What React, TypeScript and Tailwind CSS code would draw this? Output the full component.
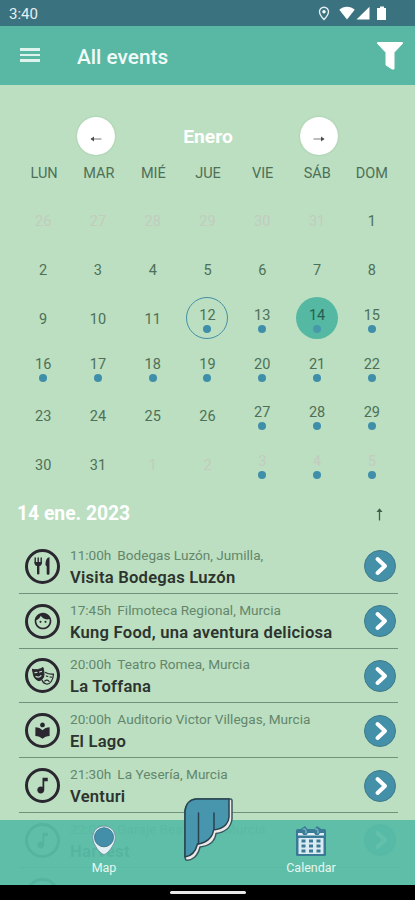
import type { ReactNode } from 'react';
import { MdFace, MdLocalLibrary, MdMusicNote } from 'react-icons/md';

type Day = { n: number; out?: boolean; dot?: boolean; today?: boolean; selected?: boolean };

const out = (n: number, dot = false): Day => ({ n, out: true, dot });
const day = (n: number): Day => ({
  n,
  dot: (n >= 12 && n <= 22) || (n >= 27 && n <= 29),
  today: n === 12,
  selected: n === 14,
});

const days: Day[] = [
  ...[26, 27, 28, 29, 30, 31].map((n) => out(n)),
  ...Array.from({ length: 31 }, (_, i) => day(i + 1)),
  out(1),
  out(2),
  out(3, true),
  out(4, true),
  out(5, true),
];

const weekdays = ['LUN', 'MAR', 'MIÉ', 'JUE', 'VIE', 'SÁB', 'DOM'];

function Cutlery() {
  return (
    <svg width="20" height="20" viewBox="0 0 20 20" fill="none" stroke="#2b2730" strokeLinecap="round">
      <path d="M2.200 2v5M5.200 2v5M8.200 2v5" strokeWidth="1.400" />
      <path d="M1.500 6h7.400c0 2.600-1 3.800-2.400 4H3.900C2.500 9.800 1.500 8.600 1.500 6z" fill="#2b2730" stroke="none" />
      <path d="M5.200 9v8.200" strokeWidth="2.400" />
      <path d="M16.500 1.300c-3 .5-4 3.700-4 7.700l1.200 1.500v7c0 1.700 2.800 1.700 2.800 0z" fill="#2b2730" stroke="none" />
    </svg>
  );
}

function Masks() {
  return (
    <svg width="24" height="22" viewBox="0 0 24 22" fill="none" strokeLinecap="round" strokeLinejoin="round">
      <path d="M1.500 4.500c3.500.7 7 .2 10.500-2 .8 3.500 1.300 6 .8 8.500-.7 3-2.800 4.500-4.800 4.700-2-.4-4.500-2-5.300-5C2.200 8.800 1.800 6.500 1.500 4.500z" fill="#2b2730" stroke="#2b2730" />
      <path d="M4 7.700l2-.3M8.500 7l2-.6M5 11.500c1.500 1 4 .7 5-.8" stroke="#bbdfc0" strokeWidth="1.200" />
      <path d="M14.500 7.500c2.500 1.500 5 2 8 1.500-.2 3-.8 5.500-2.200 7.500-1.300 1.800-3.500 2.800-5 2.500-2.200-.5-3.700-2-4.300-4" stroke="#2b2730" strokeWidth="1.200" />
      <path d="M15.300 11l1.500.5M19 12l1.400.1M13.800 16c1.500-1.300 3.300-1 4.300.5" stroke="#2b2730" strokeWidth="1.200" />
    </svg>
  );
}

const events: { time: string; place: string; title?: string; icon: ReactNode }[] = [
  { time: '11:00h', place: 'Bodegas Luzón, Jumilla,', title: 'Visita Bodegas Luzón', icon: <Cutlery /> },
  { time: '17:45h', place: 'Filmoteca Regional, Murcia', title: 'Kung Food, una aventura deliciosa', icon: <MdFace size={20} /> },
  { time: '20:00h', place: 'Teatro Romea, Murcia', title: 'La Toffana', icon: <Masks /> },
  { time: '20:00h', place: 'Auditorio Victor Villegas, Murcia', title: 'El Lago', icon: <MdLocalLibrary size={19} /> },
  { time: '21:30h', place: 'La Yesería, Murcia', title: 'Venturi', icon: <MdMusicNote size={21} /> },
  { time: '22:00h', place: 'Garaje Beat Club, Murcia', title: 'Harvest', icon: <MdMusicNote size={21} /> },
];

function DayCell({ d }: { d: Day }) {
  const ring = d.today ? 'border border-[#4590a6]' : d.selected ? 'bg-[#54b8a2]' : '';
  const color = d.out ? 'text-[#c3cbbf]' : d.selected ? 'text-[#245f50]' : 'text-[#4e7058]';
  return (
    <div className="flex h-[48.750px] items-center justify-center">
      <div className={`flex size-[42px] flex-col items-center justify-center pt-[4px] ${ring} rounded-full`}>
        <span className={`text-[14.500px] leading-[18px] ${color}`}>{d.n}</span>
        {d.dot && <span className={`size-[8px] rounded-full ${d.selected ? 'bg-[#4798a8]' : 'bg-[#3f8fab]'}`} />}
      </div>
    </div>
  );
}

function RoundButton({ children }: { children: ReactNode }) {
  return (
    <button className="flex size-[38px] items-center justify-center rounded-full bg-white pt-[6px] text-[#4a524e] shadow-[0_0_2px_rgba(60,110,70,0.25)]">
      {children}
    </button>
  );
}

export default function App() {
  return (
    <div className="relative flex h-[900px] w-[415px] flex-col overflow-hidden bg-[#bbdfc0] font-['Roboto',sans-serif]">
      <div className="flex h-[25.500px] shrink-0 items-center justify-between bg-[#3b7280] pl-[9px] pr-[28px] text-white">
        <span className="pt-[4px] text-[15px] leading-none text-[#e6eff1]">3:40</span>
        <svg width="70" height="18" viewBox="0 0 70 18" fill="#fff">
          <path d="M7 3.200a4.500 4.500 0 0 0-4.500 4.600C2.500 11 7 15.500 7 15.500s4.500-4.500 4.500-7.700A4.500 4.500 0 0 0 7 3.200z" fill="none" stroke="#e3edf0" strokeWidth="1.400" />
          <circle cx="7" cy="7.700" r="1.700" />
          <path d="M22.300 5.800C26.500 1.700 33.500 1.700 37.700 5.800L30 15.500z" />
          <path d="M52.500 2.800v12.700h-13z" />
          <path d="M61 4h2V2.500h4V4h2v12h-9V4z" />
        </svg>
      </div>

      <header className="flex h-[59.500px] shrink-0 items-center bg-[#58b8a4] pl-5 pr-[11px]">
        <div className="flex w-5 flex-col gap-[3px] pb-px">
          <span className="h-[2.500px] bg-[#def3ee]" />
          <span className="h-[2.500px] bg-[#def3ee]" />
          <span className="h-[2.500px] bg-[#def3ee]" />
        </div>
        <h1 className="ml-[37px] flex-1 pt-[4px] text-[20.800px] font-medium leading-none text-[#f1fbf8]">All events</h1>
        <svg width="28" height="30" viewBox="0 0 28 30" fill="#fff" stroke="#fff" strokeWidth="1" strokeLinejoin="round">
          <path d="M1.500 2.500h25v1L18 12.500v16.500h-2L10 25V12.500L1.500 3.500z" />
        </svg>
      </header>

      <section className="flex h-[403.500px] shrink-0 flex-col px-[15.800px] pt-8">
        <div className="flex h-[39px] items-center justify-between pl-[61px] pr-[61px]">
          <RoundButton>
            <svg width="14" height="8" viewBox="0 0 14 8" fill="none" stroke="currentColor" strokeWidth="1"><path d="M2 4h10.500" strokeOpacity="0.75" /><path d="M5 1.500 1.500 4 5 6.500z" fill="currentColor" stroke="none" /></svg>
          </RoundButton>
          <h2 className="pl-px pt-[2px] text-[19.200px] font-bold leading-none text-white">Enero</h2>
          <RoundButton>
            <svg width="14" height="8" viewBox="0 0 14 8" fill="none" stroke="currentColor" strokeWidth="1"><path d="M1.500 4H12" strokeOpacity="0.75" /><path d="M9 1.500 12.500 4 9 6.500z" fill="currentColor" stroke="none" /></svg>
          </RoundButton>
        </div>
        <div className="grid h-[42.800px] grid-cols-7 pl-px pt-[9.500px] text-center text-[14.500px] leading-[18px] text-[#4e7058]">
          {weekdays.map((w) => <span key={w}>{w}</span>)}
        </div>
        <div className="grid grid-cols-7">
          {days.map((d, i) => <DayCell key={i} d={d} />)}
        </div>
      </section>

      <section className="flex shrink-0 flex-col">
        <div className="flex h-[50.500px] items-start justify-between pl-[17px] pr-[31px] pt-[15px]">
          <h2 className="text-[19.300px] font-bold leading-[20px] text-white">14 ene. 2023</h2>
          <svg className="mt-[4px]" width="9" height="14" viewBox="0 0 9 14" fill="none" stroke="#3c6049" strokeWidth="1.300"><path d="M4.500 12.500V2" /><path d="M4.500 0.300 7.500 4H1.500z" fill="#3c6049" stroke="none" /></svg>
        </div>
        <ul className="ml-[19px] mr-[17px]">
          {events.map((e, i) => (
            <li key={i} className="flex h-[54.800px] items-center border-b border-[#71927a] pl-[6px] pr-[2px] pt-px">
              <span className="flex size-[35px] shrink-0 items-center justify-center rounded-full border-[3px] border-[#2b2730] text-[#2b2730]">{e.icon}</span>
              <div className="ml-[10px] flex-1 whitespace-nowrap pt-[2px]">
                <p className="text-[13.600px] leading-[19px] text-[#64866c]"><span className="mr-[6px]">{e.time}</span>{e.place}</p>
                <p className="pt-[2px] text-[16.600px] font-semibold leading-[22px] tracking-[0.240px] text-[#2d332f]">{e.title}</p>
              </div>
              <span className="flex size-[32px] shrink-0 items-center justify-center rounded-full border border-[#407b8b] bg-[#4490a9]">
                <svg width="18" height="22" viewBox="0 0 18 22" fill="none" stroke="#fff" strokeWidth="4" strokeLinecap="round" strokeLinejoin="round"><path d="M6.500 4l7.500 7-7.500 7" /></svg>
              </span>
            </li>
          ))}
          <li className="flex pl-[6px] pt-[10px]">
            <span className="size-[35px] rounded-full border-[3px] border-[#2b2730]" />
          </li>
        </ul>
      </section>

      <nav className="absolute inset-x-0 bottom-0">
        <div className="relative flex h-[64.500px] justify-between bg-[#58bca6]/94 px-[73px] text-[12.500px] leading-[14px] text-[#e6f7f2]">
          <a className="flex w-[62px] flex-col items-center pt-[5px]">
            <svg width="26" height="31" viewBox="0 0 26 31">
              <path d="M13 1C6.500 1 1.700 6 1.700 12.500 1.700 20 10 29.500 13 29.500s11.300-9.500 11.300-17C24.300 6 19.500 1 13 1z" fill="#e4f0f4" stroke="#6f99a7" />
              <circle cx="13" cy="12.300" r="9.500" fill="#438fa9" stroke="#427c91" />
            </svg>
            <span className="mt-[5px]">Map</span>
          </a>
          <a className="flex w-[62px] flex-col items-center pt-[5px]">
            <svg width="32" height="32" viewBox="0 0 32 32">
              <rect x="1" y="4" width="30" height="27" rx="1.500" fill="#397b96" />
              <path d="M5 4.500 10 1l4 5H5zM27 4.500 22 1l-4 5h9z" fill="#397b96" />
              <path d="M3 8h4l1.500 2h3L13 8h6l1.500 2h3L25 8h4v2.500H3z" fill="#e1eef5" />
              <path d="M8 4.500c2-1.500 4 1 2.500 4M20 4.500c2-1.500 4 1 2.500 4" fill="none" stroke="#71aebe" strokeWidth="1.500" />
              <rect x="3.500" y="13" width="25" height="16" fill="#dcebf3" />
              <g fill="#397b96">
                <path d="M6.500 14.500h4v3h-4zM14 14.500h4v3h-4zM21.500 14.500h4v3h-4zM6.500 19.500h4v3h-4zM14 19.500h4v3h-4zM21.500 19.500h4v3h-4zM6.500 24.500h4v3h-4zM14 24.500h4v3h-4zM21.500 24.500h4v3h-4z" />
              </g>
            </svg>
            <span className="mt-[4px]">Calendar</span>
          </a>
          <svg className="absolute -top-[23px] left-[182px]" width="52" height="66" viewBox="0 0 52 66" strokeLinejoin="round" strokeLinecap="round">
            <path d="M3 14C4 6 9 2 15 2H48.500c1 0 1.500 1 1.500 2V22C49 31 42 35.500 34 36.500 33 45 26 49 18 50 16 59 10 64 4 63 3 62 3 61 3 59z" fill="#eee9e7" stroke="#365761" strokeWidth="1.500" />
            <path d="M3 14C4 6 9 2 15 2H47V20C46 28 40 32 31.500 33 30.500 41 24 46 15.500 47 13.500 55 10 59 3 60z" fill="#4796ad" stroke="#28434f" strokeWidth="1.500" />
            <path d="M16.500 16v31M32 16v16" fill="none" stroke="#28434f" strokeWidth="1.500" />
          </svg>
        </div>
        <div className="flex h-[15.500px] items-center justify-center bg-black">
          <span className="h-[3px] w-[76px] rounded-full bg-[#e8e8e8]" />
        </div>
      </nav>
    </div>
  );
}
